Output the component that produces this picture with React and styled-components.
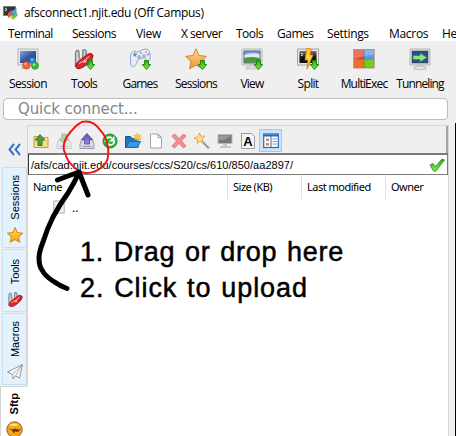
import React from "react";
import styled, { createGlobalStyle } from "styled-components";

const Global = createGlobalStyle`
  * { box-sizing: border-box; }
  body { margin: 0; background: #fff; overflow: hidden; }
`;

const Window = styled.div`
  width: 456px;
  height: 436px;
  position: relative;
  display: flex;
  flex-direction: column;
  background: #fff;
  color: #000;
  font: 12px "Open Sans", "Noto Sans", sans-serif;
  overflow: hidden;
  white-space: nowrap;
`;

const TitleBar = styled.div`
  height: 25px;
  flex: none;
  padding-left: 3px;
  display: flex;
  align-items: center;
  gap: 5px;
  letter-spacing: -0.3px;
`;

const MenuBar = styled.div`
  height: 16px;
  flex: none;
  padding-left: 8px;
  display: flex;
  align-items: center;
`;

const MenuItem = styled.span`
  width: ${(p) => p.$w}px;
  flex: none;
  letter-spacing: ${(p) => p.$ls}px;
`;

const ToolBar = styled.div`
  height: 57px;
  flex: none;
  padding-top: 7px;
  display: flex;
  background: #efefef;
`;

const ToolButton = styled.div`
  width: 56px;
  flex: none;
  display: flex;
  flex-direction: column;
  align-items: center;
  gap: 4px;
  line-height: 19px;
  letter-spacing: ${(p) => p.$ls}px;
`;

const QuickRow = styled.div`
  height: 27px;
  flex: none;
  padding-left: 3px;
  background: #efefef;
`;

const QuickInput = styled.div`
  width: 445px;
  height: 22px;
  border: 1px solid #bcbcbc;
  border-radius: 4px;
  background: #fff;
  padding-left: 14px;
  color: #858585;
  font: 15px/20px "DejaVu Sans", sans-serif;
  letter-spacing: -0.1px;
`;

const Body = styled.div`
  flex: 1;
  min-height: 0;
  display: flex;
  background: #efefef;
`;

const SideBar = styled.div`
  width: 27px;
  flex: none;
  display: flex;
  flex-direction: column;
`;

const Collapse = styled.div`
  height: 42px;
  flex: none;
  padding: 18px 0 0 8px;
`;

const SideTab = styled.div`
  height: ${(p) => p.$h}px;
  flex: none;
  margin: 0 ${(p) => (p.$active ? "-1px 0 0" : "0 1px 2px")};
  border: 1px solid ${(p) => (p.$active ? "#d5d5d5" : "#c4e1f5")};
  border-right-color: ${(p) => (p.$active ? "#fff" : "#d5d5d5")};
  background: ${(p) => (p.$active ? "#fff" : "#e4f2fd")};
  position: relative;
  display: flex;
  flex-direction: column;
  align-items: center;
  justify-content: flex-end;
  gap: 7px;
  padding-bottom: 4px;
`;

const SideLabel = styled.span`
  writing-mode: vertical-rl;
  transform: rotate(180deg);
  font: ${(p) => (p.$bold ? 700 : 400)} 11px/16px "Liberation Sans", Arial, sans-serif;
  letter-spacing: ${(p) => p.$ls || 0}px;
`;

const Panel = styled.div`
  width: 422px;
  flex: none;
  border: 1px solid #d5d5d5;
  border-bottom: 0;
  background: #fff;
  display: flex;
  flex-direction: column;
`;

const FileBar = styled.div`
  height: 27px;
  flex: none;
  display: flex;
  align-items: center;
  padding: 2px 0 0 1px;
  background: #efefef;
  border-right: 2px solid #a5a5a5;
`;

const FileButton = styled.div`
  width: 23px;
  height: 23px;
  display: flex;
  align-items: center;
  justify-content: center;
  background: ${(p) => (p.$on ? "#cce4f7" : "transparent")};
  border: ${(p) => (p.$on ? "1px solid #9acbf2" : "0")};
  opacity: ${(p) => (p.$dim ? 0.45 : 1)};
`;

const PathBar = styled.div`
  height: 22px;
  flex: none;
  border: 1px solid #7a7a7a;
  border-top-width: 2px;
  border-left-color: #333;
  display: flex;
  align-items: center;
  justify-content: space-between;
  padding: 0 2px;
  font: 11px "Liberation Sans", Arial, sans-serif;
  letter-spacing: 0.03px;
`;

const Columns = styled.div`
  height: 24px;
  flex: none;
  display: flex;
`;

const Column = styled.div`
  width: ${(p) => p.$w}px;
  flex: none;
  padding-left: 5px;
  border-right: ${(p) => (p.$last ? 0 : "1px solid #e0e0e0")};
  font: 11px/24px "Noto Sans", sans-serif;
  letter-spacing: -0.5px;
`;

const FileRow = styled.div`
  height: 16px;
  flex: none;
  display: flex;
  align-items: center;
  gap: 6px;
  padding-left: 24px;
`;

const Notes = styled.div`
  padding: 19px 0 0 52px;
  font: 27px/36px "Liberation Sans", Arial, sans-serif;
  word-spacing: 1.5px;
  -webkit-text-stroke: 0.5px #000;
`;

const Note = styled.div`
  letter-spacing: ${(p) => p.$ls}px;
`;

const Edge = styled.div`
  width: 1px;
  margin: -2px 0 0 auto;
  background: #000;
`;

const Annotation = styled.svg`
  position: absolute;
  left: 0;
  top: 0;
  pointer-events: none;
`;

const Gradients = styled.svg`
  position: absolute;
`;

const Defs = () => (
  <Gradients width="0" height="0">
    <defs>
      <linearGradient id="screen" x2="1" y2="1"><stop stopColor="#8ea4dc" /><stop offset=".5" stopColor="#3b57a5" /><stop offset="1" stopColor="#1c3374" /></linearGradient>
      <linearGradient id="gold" x2="0" y2="1"><stop stopColor="#ffe93b" /><stop offset="1" stopColor="#f79a1c" /></linearGradient>
      <linearGradient id="orange" x2="0" y2="1"><stop stopColor="#fbd990" /><stop offset="1" stopColor="#f4932e" /></linearGradient>
      <linearGradient id="green" x2="0" y2="1"><stop stopColor="#2fa51b" /><stop offset="1" stopColor="#7cf03a" /></linearGradient>
      <linearGradient id="black" x2="0" y2="1"><stop stopColor="#777" /><stop offset=".5" stopColor="#111" /></linearGradient>
      <linearGradient id="purple" x2="0" y2="1"><stop stopColor="#5b49a8" /><stop offset="1" stopColor="#9b8de0" /></linearGradient>
    </defs>
  </Gradients>
);

const DownArrow = () => (
  <path d="M15.500 12.500h4v4h2.200l-4.200 5-4.200-5h2.200z" fill="url(#green)" stroke="#15830c" strokeWidth=".9" />
);

const knife = (
  <>
    <path d="M2.500 19V5.500q0-3 2-3t1.500 4l1 5M9.500 12l.5-10q3-1 3.500 2l-1 7" fill="#c9cccf" stroke="#7b8187" strokeWidth="1.300" />
    <path d="M4 20.500C1 18 3.500 14 8 11.500L15 6q4-1.500 5 1.500.5 3.500-5 8-7 6-11 5z" fill="#dc2528" stroke="#941217" />
    <path d="M6 15.500q6-2.500 10-7" stroke="#ff8b86" strokeWidth="1.500" fill="none" />
    <path d="M10.500 14.500l3-2M11.500 12.500l1.500 2" stroke="#fff" />
  </>
);
const star = "M11 .8l3 6.700 7.400.9-5.400 5 1.400 7.300L11 17.200l-6.400 3.500L6 13.400l-5.400-5 7.400-.9z";
const monitor = (
  <>
    <path d="M1 1h20v16H1z" fill="#e4e5e6" stroke="#b3b5b8" />
    <path d="M9 17h4v2h4v2H5v-2h4z" fill="#dedfe0" stroke="#b1b3b5" strokeWidth=".7" />
  </>
);

const bigIcons = {
  session: (
    <>
      <rect x="1" y="1" width="20" height="16" fill="#e5e5e6" stroke="#b3b5b8" />
      <rect x="3" y="3" width="16" height="12" fill="url(#screen)" />
      <path d="M4 19h6v2H4z" fill="#ccc" />
      <circle cx="15.500" cy="12.500" r="3.200" fill="#2989e8" stroke="#1260b5" strokeWidth=".6" />
      <circle cx="9.500" cy="17.300" r="3.800" fill="#f26432" stroke="#bc3e15" strokeWidth=".6" />
      <circle cx="18" cy="17.800" r="3.500" fill="#35bd3b" stroke="#16841c" strokeWidth=".6" />
      <circle cx="8.500" cy="16" r="1.200" fill="#ffae86" />
      <circle cx="17" cy="16.500" r="1.200" fill="#98ea95" />
      <circle cx="15" cy="11.500" r="1" fill="#9bd0ff" />
    </>
  ),
  tools: <>{knife}<DownArrow /></>,
  games: (
    <>
      <path d="M1.500 13C1 7 2 3.500 5.500 3l3 1 5.500-2.500 4-.5c3 1 3.500 6 3 10-1 3-3.500 2-5.500-1.500l-6 1.500c-2 4-3 8-6 7.500-2-.5-2-3-2-5.500z" fill="#e3ecf9" stroke="#8fa5cb" />
      <path d="M4 7l4-1M5.500 4.500l1 4M11 5h2" stroke="#5c77a9" fill="none" strokeWidth="1.200" />
      <circle cx="10" cy="9" r="1.500" fill="#b4c6e4" stroke="#7890ba" strokeWidth=".6" />
      <circle cx="15" cy="8" r="1.500" fill="#b4c6e4" stroke="#7890ba" strokeWidth=".6" />
      <circle cx="17" cy="4" r="1.100" fill="#e9a04f" /><circle cx="19" cy="6.500" r="1" fill="#668ccb" />
      <DownArrow />
    </>
  ),
  sessions: <><path d={star} fill="url(#orange)" stroke="#d08335" /><DownArrow /></>,
  view: (
    <>
      {monitor}
      <path d="M3 3h16v12H3z" fill="#6fa5e8" stroke="#333" strokeWidth=".7" />
      <path d="M3.500 7q6-3 15-1v4h-15z" fill="#dceafb" />
      <path d="M3.500 10q6-2 15 0v4.500h-15z" fill="#4c9b2c" />
      <DownArrow />
    </>
  ),
  split: (
    <>
      <rect x=".5" y="1" width="21" height="16" fill="#e7e7e7" stroke="#a5a5a5" />
      <rect x="2.500" y="3" width="17" height="12" fill="url(#black)" />
      <path d="M4 5l2 1.500L4 8" stroke="#fff" fill="none" />
      <path d="M10 0l4 1-1 6h3l-6 14 1-9H8z" fill="#ffd43b" stroke="#e8770d" strokeWidth=".9" />
      <DownArrow />
    </>
  ),
  multi: (
    <>
      <path d="M1 2h10v9H1z" fill="#dd4a2c" /><path d="M11 2h10v9H11z" fill="#5a9bea" />
      <path d="M1 11h10v9H1z" fill="#ee6f2c" /><path d="M11 11h10v9H11z" fill="#6cd119" />
      <path d="M1 2h20v5Q10 7 1 12z" fill="#fff" opacity=".25" />
      <path d="M11 2v18M1 11h20" stroke="#744" strokeWidth=".8" opacity=".5" />
      <rect x=".7" y="1.500" width="20.500" height="18.500" fill="none" stroke="#a86b58" strokeWidth=".7" />
    </>
  ),
  tunnel: (
    <>
      {monitor}
      <rect x="3" y="3" width="16" height="12" fill="#284e91" stroke="#444" strokeWidth=".6" />
      <path d="M4 7.500h7V5l7 4.500-7 4.500v-2.500H4z" fill="#8de27a" stroke="#2f8a37" strokeWidth=".7" />
      <ellipse cx="11" cy="19.800" rx="6" ry="1.800" fill="#e5e5e5" stroke="#adadad" strokeWidth=".7" />
    </>
  ),
};

const drawer = (
  <>
    <path d="M2.500 7l-1.500 4.500v4h14v-4L13.500 7z" fill="#d9dbe6" stroke="#9799ad" />
    <path d="M3.500 13.500h9" stroke="#9799ad" />
  </>
);

const smallIcons = {
  up: (
    <>
      <path d="M1 3.500h5l1 1h8v10H1z" fill="#f6dc85" stroke="#c8a039" />
      <path d="M2 6h12" stroke="#fff3b8" />
      <path d="M7 1.500L12 7H9v5.500H5V7H2z" fill="#4f9e3d" stroke="#2c7324" strokeWidth=".9" />
    </>
  ),
  download: <>{drawer}<path d="M5.500 1h5v5H13l-5 5-5-5h2.500z" fill="#4cad4b" stroke="#438346" strokeWidth=".7" /></>,
  upload: <>{drawer}<path d="M8 .5l5.500 6h-3V11h-5V6.500h-3z" fill="url(#purple)" stroke="#51429b" strokeWidth=".8" /></>,
  refresh: (
    <>
      <circle cx="8" cy="8" r="7" fill="#2db53a" stroke="#16882a" />
      <path d="M3.500 9q0-4.800 4.500-4.800l2 .8M12.500 8Q12 12 8 12L5 10.500" stroke="#fff" fill="none" strokeWidth="1.800" />
      <path d="M12.500 3v5.500H7z" fill="#fff" />
    </>
  ),
  folder: (
    <>
      <path d="M.5 14.500v-11h5l1.500 2h6v9z" fill="#2775bf" stroke="#155796" />
      <path d="M1 14.500l3-6h11.500l-3 6z" fill="#3a98df" stroke="#176ab0" />
      <path d="M12.500 0l1 2.500L16 2l-1 2.500 1 2-2.500-.5-1 2-1-2L9 6.500l1-2L9 2l2.500.5z" fill="#ffc83a" stroke="#e6a827" strokeWidth=".5" />
    </>
  ),
  page: <path d="M2.500 1h7.500l3.500 3.500V15h-11zM10 1v3.500h3.500" fill="#fff" stroke="#a3a3a3" />,
  remove: <path d="M1 3l2.500-2L8 5.500 12.500 1 15 3l-4.500 5 4.500 5-2.500 2L8 10.500 3.500 15 1 13l4.500-5z" fill="#f58f8f" stroke="#de6a6a" strokeWidth=".8" />,
  wand: (
    <>
      <path d="M7 7l8 8" stroke="#888" strokeWidth="2.400" /><path d="M7 6l8 8" stroke="#ddd" />
      <path d="M5.500 0l1.300 3.300L11 3 8 6l1.500 3.500L6 8l-3 2.500L3.500 7 0 5l3.700-1z" fill="#ffe76b" stroke="#e5805a" strokeWidth=".7" />
    </>
  ),
  computer: (
    <>
      <path d="M1 1.500h14v9H1z" fill="#777" stroke="#bbb" /><path d="M2 2.500h12l-6 4-6 1z" fill="#999" />
      <path d="M6 11h4v2h4v2H3v-2h3z" fill="#c6c6c6" />
    </>
  ),
  font: (
    <>
      <path d="M1.500.5h10l3 3v12h-13z" fill="#f5f5f5" stroke="#9a9a9a" />
      <text x="8" y="12.500" textAnchor="middle" fontFamily="Liberation Sans" fontSize="13" fontWeight="700">A</text>
    </>
  ),
  list: (
    <>
      <rect x=".7" y="1" width="14.600" height="13.500" fill="#fff" stroke="#2469bd" strokeWidth="1.200" />
      <path d="M1 2.500h14" stroke="#2469bd" strokeWidth="2" />
      <path d="M8 3v11" stroke="#2469bd" /><path d="M3 5.500h3v2.500H3zM3 10h3v2.500H3z" fill="#ef8043" />
      <path d="M9.500 6H14M9.500 8.500H14M9.500 11H14" stroke="#89a0bc" />
    </>
  ),
};

const Icon = ({ size, box, children }) => (
  <svg width={size} height={size} viewBox={`0 0 ${box} ${box}`}>{children}</svg>
);

const menus = [["Terminal", 64, -0.6], ["Sessions", 64, -0.5], ["View", 45, -0.3], ["X server", 55, -0.5], ["Tools", 41, -0.5], ["Games", 50, -0.5], ["Settings", 62, -0.35], ["Macros", 53, -0.3], ["Help", 30, -0.3]];
const tools = [["session", "Session", -0.65], ["tools", "Tools", -0.8], ["games", "Games", -0.8], ["sessions", "Sessions", -0.75], ["view", "View", -0.75], ["split", "Split", -0.7], ["multi", "MultiExec", -0.8], ["tunnel", "Tunneling", -0.9]];
const files = ["up", "download", "upload", "refresh", "folder", "page", "remove", "wand", "computer", "font", "list"];

export default function App() {
  return (
    <Window>
      <Global />
      <Defs />
      <TitleBar>
        <Icon size={16} box={16}>
          <path d="M.5 1.500h12v9H.5z" fill="#333" stroke="#777" />
          <path d="M2 3l2 1.500L2 6" stroke="#fff" fill="none" />
          <path d="M5 8l4-3v5l-4 3z" fill="#ee5533" /><path d="M9 6l4.500-3v5L9 10z" fill="#4b9cf2" />
          <path d="M9 11l4-4 2 3-5 5z" fill="#59c936" /><path d="M6 12l3-2 1 5z" fill="#f6c237" />
        </Icon>
        afsconnect1.njit.edu (Off Campus)
      </TitleBar>
      <MenuBar>
        {menus.map(([label, w, ls]) => <MenuItem key={label} $w={w} $ls={ls}>{label}</MenuItem>)}
      </MenuBar>
      <ToolBar>
        {tools.map(([icon, label, ls]) => (
          <ToolButton key={label} $ls={ls}>
            <Icon size={22} box={22}>{bigIcons[icon]}</Icon>
            {label}
          </ToolButton>
        ))}
      </ToolBar>
      <QuickRow><QuickInput>Quick connect...</QuickInput></QuickRow>
      <Body>
        <SideBar>
          <Collapse>
            <Icon size={13} box={13}>
              <path d="M6 1L1.500 6.500 6 12M12 1L7.500 6.500 12 12" fill="none" stroke="#2d73dc" strokeWidth="2" />
            </Icon>
          </Collapse>
          <SideTab $h={81}>
            <SideLabel>Sessions</SideLabel>
            <Icon size={16} box={22}><path d={star} fill="url(#gold)" stroke="#d58a1c" strokeWidth="1.400" /></Icon>
          </SideTab>
          <SideTab $h={63}>
            <SideLabel $ls={-0.1}>Tools</SideLabel>
            <Icon size={16} box={21}>{knife}</Icon>
          </SideTab>
          <SideTab $h={72}>
            <SideLabel>Macros</SideLabel>
            <Icon size={16} box={16}>
              <path d="M15.500.5L.5 8l5 2.500L6 15l2.500-3 4 2z" fill="#f5f5f5" stroke="#999" />
              <path d="M15.500.5l-10 10M15.500.5l-7 11.500" stroke="#999" fill="none" strokeWidth=".7" />
            </Icon>
          </SideTab>
          <SideTab $h={57} $active>
            <SideLabel $bold>Sftp</SideLabel>
            <Icon size={17} box={17}>
              <circle cx="8.500" cy="8.500" r="7.700" fill="#f5a51d" stroke="#9a5d0c" />
              <path d="M3 4q5-3 10 0-5 2-10 0z" fill="#ffe38a" />
              <path d="M2 7.500l4 1 3-1 4 1 2-.5-3 3-3-.5-1 2-2-3z" fill="#6b3f05" />
            </Icon>
          </SideTab>
        </SideBar>
        <Panel>
          <FileBar>
            {files.map((f) => (
              <FileButton key={f} $on={f === "list"} $dim={f === "download"}>
                <Icon size={16} box={16}>{smallIcons[f]}</Icon>
              </FileButton>
            ))}
          </FileBar>
          <PathBar>
            /afs/cad.njit.edu/courses/ccs/S20/cs/610/850/aa2897/
            <Icon size={16} box={16}>
              <path d="M1 8l3-1.500 2.500 3L13 2l2.500 1L7 14H4.500z" fill="url(#green)" stroke="#3f9a34" />
            </Icon>
          </PathBar>
          <Columns>
            <Column $w={200}>Name</Column>
            <Column $w={74}>Size (KB)</Column>
            <Column $w={84}>Last modified</Column>
            <Column $w={60} $last>Owner</Column>
          </Columns>
          <FileRow>
            <Icon size={14} box={16}>
              <path d="M2 1h9l3 3v11H2z" fill="#eee" stroke="#aaa" />
            </Icon>
            ..
          </FileRow>
          <Notes>
            <Note $ls={0.75}>1. Drag or drop here</Note>
            <Note $ls={0.9}>2. Click to upload</Note>
          </Notes>
        </Panel>
        <Edge />
      </Body>
      <Annotation width="456" height="436" fill="none">
        <path d="M85 121.500C81 121.500 78 124 75 127C69 133 65 138 64 144C63 148 64 151 65 153C67 160 70 164 75 168C79 172 83 173 87 173C93 173 97 171 101 168C105 164 108 161 108 156C109 151 108 147 107 143C106 138 103 133 100 130C96 124 91 121 85 121.500Z" stroke="#f01414" strokeWidth="1.900" />
        <path d="M67 288.500Q60 286 53 281Q45 276 42 270Q39 266 39 258Q39 252 43 242Q47 229 53 217Q60 204 68 193Q75 182 79 172M57.500 180Q68 176 79 172L88 195" stroke="#000" strokeWidth="5" strokeLinecap="round" strokeLinejoin="round" />
      </Annotation>
    </Window>
  );
}
